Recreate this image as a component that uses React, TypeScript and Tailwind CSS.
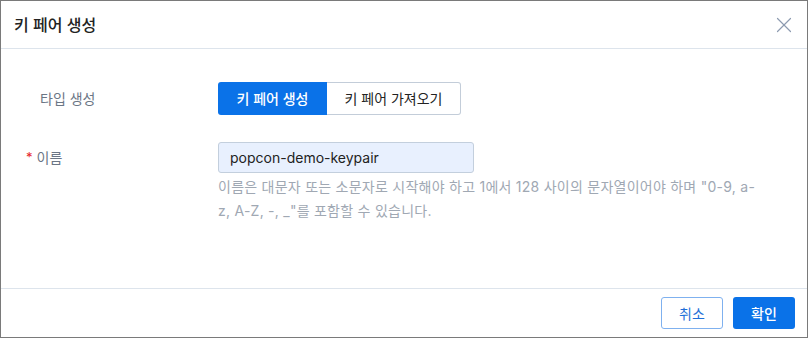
import { X } from 'lucide-react';

export default function App() {
  return (
    <div
      className="w-[808px] h-[338px] border border-[#7a7a7a] bg-white flex flex-col text-[#222]"
      style={{ fontFamily: 'Inter, "Noto Sans CJK KR", sans-serif' }}
    >
      <div className="h-[48px] shrink-0 flex items-center justify-between pl-[13px] pr-[10px] border-b border-[#dde4ec]">
        <h1 className="text-[16px] font-medium text-[#222]">키 페어 생성</h1>
        <X className="w-[26px] h-[26px] text-[#8d9bb0]" strokeWidth={1.1} />
      </div>

      <div className="flex-1 pt-[33px]">
        <div className="flex items-center h-[33px]">
          <div className="w-[217px] pl-[39px] text-[14px] text-[#6b7685]">타입 생성</div>
          <div className="flex h-[33px]">
            <button className="w-[109px] rounded-l-[3px] bg-[#0a72e8] text-white text-[14px] font-medium">
              키 페어 생성
            </button>
            <button className="w-[134px] rounded-r-[3px] border border-l-0 border-[#c3cdd9] bg-white text-[14px] text-[#222]">
              키 페어 가져오기
            </button>
          </div>
        </div>

        <div className="flex mt-[27px]">
          <div className="w-[217px] pl-[25px] h-[31px] flex items-center text-[14px] text-[#6b7685]">
            <span className="text-[#e5252a] mr-[4px] text-[13px]">*</span>
            이름
          </div>
          <div className="flex flex-col">
            <div className="w-[256px] h-[31px] rounded-[3px] border border-[#c3cfdd] bg-[#e8f0fe] flex items-center pl-[11px] text-[14px] text-[#222]">
              popcon-demo-keypair
            </div>
            <p className="w-[543px] mt-[2px] text-[14px] leading-[24px] tracking-[0.25px] text-[#a0a8b3]">
              이름은 대문자 또는 소문자로 시작해야 하고 1에서 128 사이의 문자열이어야 하며 "0-9, a-z, A-Z, -, _"를 포함할 수 있습니다.
            </p>
          </div>
        </div>
      </div>

      <div className="h-[49px] shrink-0 border-t border-[#dde4ec] flex items-center justify-end gap-[10px] pr-[12px]">
        <button className="w-[62px] h-[32px] rounded-[3px] border border-[#7fb1ef] bg-white text-[14px] text-[#1f6fd8]">
          취소
        </button>
        <button className="w-[62px] h-[32px] rounded-[3px] bg-[#0a72e8] text-[14px] font-medium text-white">
          확인
        </button>
      </div>
    </div>
  );
}
